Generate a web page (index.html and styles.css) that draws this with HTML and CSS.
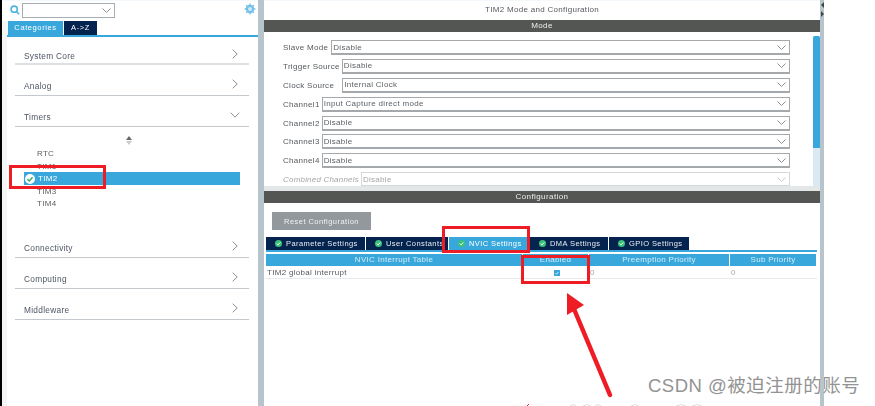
FILE: index.html

```html
<!DOCTYPE html>
<html lang="en">
<head>
    <meta charset="UTF-8">
    <title>TIM2 Mode and Configuration</title>
    <link rel="stylesheet" href="styles.css">
</head>
<body>
    <div id="shot">
        <div class="app">
            <!-- left tree panel -->
            <div class="side">
                <div class="search">
                    <svg class="search-icon" viewBox="0 0 10 10"><circle cx="4.2" cy="4.2" r="3.1"/><path d="M6.5 6.5 9.2 9.2"/></svg>
                    <div class="combo"><svg class="chev" viewBox="0 0 9 5"><path d="M.5.5 4.5 4.5 8.5.5"/></svg></div>
                    <svg class="gear" viewBox="0 0 12 12"><path class="gear-teeth" d="M6 .6v1.6M6 9.8v1.6M.6 6h1.6M9.8 6h1.6M2.2 2.2l1.1 1.1M8.7 8.7l1.1 1.1M2.2 9.8l1.1-1.1M8.7 3.3l1.1-1.1"/><circle cx="6" cy="6" r="4.2"/><circle class="gear-in" cx="6" cy="6" r="2"/></svg>
                </div>
                <div class="side-tabs">
                    <div class="side-tab on">Categories</div>
                    <div class="side-tab">A-&gt;Z</div>
                </div>
                <div class="tree">
                    <div class="group first">System Core<svg class="arrow" viewBox="0 0 6 10"><path d="M.7.7 5.2 5 .7 9.3"/></svg></div>
                    <div class="group">Analog<svg class="arrow" viewBox="0 0 6 10"><path d="M.7.7 5.2 5 .7 9.3"/></svg></div>
                    <div class="group">Timers<svg class="arrow down" viewBox="0 0 10 6"><path d="M.7.7 5 5.2 9.3.7"/></svg></div>
                    <div class="group-body">
                        <div class="sorter"><span class="up"></span><span class="dn"></span></div>
                        <div class="item">RTC</div>
                        <div class="item">TIM1</div>
                        <div class="item sel">
                            <svg class="ok" viewBox="0 0 10 10"><circle cx="5" cy="5" r="5"/><path d="M2.4 5.2 4.3 7 7.6 3.3"/></svg>
                            TIM2
                        </div>
                        <div class="item">TIM3</div>
                        <div class="item">TIM4</div>
                    </div>
                    <div class="group">Connectivity<svg class="arrow" viewBox="0 0 6 10"><path d="M.7.7 5.2 5 .7 9.3"/></svg></div>
                    <div class="group">Computing<svg class="arrow" viewBox="0 0 6 10"><path d="M.7.7 5.2 5 .7 9.3"/></svg></div>
                    <div class="group">Middleware<svg class="arrow" viewBox="0 0 6 10"><path d="M.7.7 5.2 5 .7 9.3"/></svg></div>
                </div>
            </div>

            <div class="split"></div>

            <!-- right configuration panel -->
            <div class="main">
                <div class="title">TIM2 Mode and Configuration</div>
                <div class="bar">Mode</div>
                <div class="mode">
                    <div class="form">
                        <div class="row"><label class="tight">Slave Mode</label><div class="select">Disable<svg class="chev" viewBox="0 0 9 5"><path d="M.5.5 4.5 4.5 8.5.5"/></svg></div></div>
                        <div class="row"><label>Trigger Source</label><div class="select">Disable<svg class="chev" viewBox="0 0 9 5"><path d="M.5.5 4.5 4.5 8.5.5"/></svg></div></div>
                        <div class="row"><label class="wide">Clock Source</label><div class="select">Internal Clock<svg class="chev" viewBox="0 0 9 5"><path d="M.5.5 4.5 4.5 8.5.5"/></svg></div></div>
                        <div class="row"><label>Channel1</label><div class="select">Input Capture direct mode<svg class="chev" viewBox="0 0 9 5"><path d="M.5.5 4.5 4.5 8.5.5"/></svg></div></div>
                        <div class="row"><label>Channel2</label><div class="select">Disable<svg class="chev" viewBox="0 0 9 5"><path d="M.5.5 4.5 4.5 8.5.5"/></svg></div></div>
                        <div class="row"><label>Channel3</label><div class="select">Disable<svg class="chev" viewBox="0 0 9 5"><path d="M.5.5 4.5 4.5 8.5.5"/></svg></div></div>
                        <div class="row"><label>Channel4</label><div class="select">Disable<svg class="chev" viewBox="0 0 9 5"><path d="M.5.5 4.5 4.5 8.5.5"/></svg></div></div>
                        <div class="row off"><label>Combined Channels</label><div class="select">Disable<svg class="chev" viewBox="0 0 9 5"><path d="M.5.5 4.5 4.5 8.5.5"/></svg></div></div>
                    </div>
                    <div class="scroll"><div class="thumb"></div></div>
                </div>
                <div class="divider"></div>
                <div class="bar">Configuration</div>
                <div class="config">
                    <button class="reset">Reset Configuration</button>
                    <div class="tabs">
                        <div class="tab w1"><svg class="tick" viewBox="0 0 10 10"><circle cx="5" cy="5" r="5"/><path d="M2.6 5.2 4.4 7 7.5 3.4"/></svg>Parameter Settings</div>
                        <div class="tab w2"><svg class="tick" viewBox="0 0 10 10"><circle cx="5" cy="5" r="5"/><path d="M2.6 5.2 4.4 7 7.5 3.4"/></svg>User Constants</div>
                        <div class="tab w3 on"><svg class="tick" viewBox="0 0 10 10"><circle cx="5" cy="5" r="5"/><path d="M2.6 5.2 4.4 7 7.5 3.4"/></svg>NVIC Settings</div>
                        <div class="tab w4"><svg class="tick" viewBox="0 0 10 10"><circle cx="5" cy="5" r="5"/><path d="M2.6 5.2 4.4 7 7.5 3.4"/></svg>DMA Settings</div>
                        <div class="tab w5"><svg class="tick" viewBox="0 0 10 10"><circle cx="5" cy="5" r="5"/><path d="M2.6 5.2 4.4 7 7.5 3.4"/></svg>GPIO Settings</div>
                    </div>
                    <div class="table">
                        <div class="th">NVIC Interrupt Table</div>
                        <div class="th">Enabled</div>
                        <div class="th">Preemption Priority</div>
                        <div class="th">Sub Priority</div>
                        <div class="td name">TIM2 global interrupt</div>
                        <div class="td mid"><svg class="check" viewBox="0 0 7 7"><rect width="7" height="7"/><path d="M1.8 3.7 3 4.9 5.3 2.2"/></svg></div>
                        <div class="td">0</div>
                        <div class="td">0</div>
                    </div>
                </div>
            </div>

            <div class="split thin">
                <span class="nub left"></span>
                <span class="nub right"></span>
            </div>
            <div class="blank"></div>
        </div>

        <!-- red annotations drawn over the screenshot -->
        <div class="mark m1"></div>
        <div class="mark m2"></div>
        <div class="mark m3"></div>
        <svg class="pointer" viewBox="0 0 875 406">
            <path class="shaft" d="M610 395 574 309"/>
            <path class="head" d="M567 293 584 305 567 315Z"/>
            <path class="scrap" d="M570 406q3-3 6 0M583 406q4-3 8 0M595 406q3-3 6 0M631 406q4-3 8 0M676 406q5-3 10 0M692 406q5-3 10 0"/>
            <path class="scrap red" d="M527 406l2-2"/>
        </svg>
        <div class="watermark">CSDN @被迫注册的账号</div>
    </div>
</body>
</html>
```

FILE: styles.css

```css
* {
    box-sizing: border-box;
    padding: 0;
    margin: 0;
}

body {
    background-color: #fff;
    font-family: "Liberation Sans", Arial, sans-serif;
    overflow: hidden;
}

#shot {
    position: relative;
    width: 875px;
    height: 406px;
    overflow: hidden;
}

.app {
    display: flex;
    height: 100%;
    padding-left: 2px;
    background-color: #000;
    font-size: 8px;
    letter-spacing: .3px;
    color: #55595e;
    filter: blur(.4px);
}

svg {
    display: block;
    flex: none;
}

/* left panel */
.side {
    width: 256px;
    padding-left: 5px;
    background-color: #f4f5f5;
}

.search {
    display: flex;
    align-items: flex-start;
    height: 21px;
    margin-left: -5px;
    padding: 2px 0 0 8px;
    background-color: #fff;
    border-top: 1px solid #f2f8fb;
}

.search-icon {
    width: 10px;
    height: 10px;
    margin: 2px 2px 0 0;
    fill: none;
    stroke: #4fb2e2;
    stroke-width: 1.6;
}

.combo {
    display: flex;
    align-items: center;
    justify-content: flex-end;
    width: 93px;
    height: 15px;
    padding-right: 3px;
    background-color: #fff;
    border: 1px solid #a8adaf;
}

.chev {
    width: 9px;
    height: 5px;
    fill: none;
    stroke: #8a8f93;
}

.gear {
    width: 12px;
    height: 12px;
    margin: 0 0 0 129px;
    fill: #74c0e8;
}

.gear-in {
    fill: #cde8f6;
}

.gear-teeth {
    stroke: #74c0e8;
    stroke-width: 1.4;
}

.side-tabs {
    display: flex;
    gap: 1px;
    height: 14px;
    margin-left: 1px;
    background-color: #fff;
}

.side-tab {
    width: 33px;
    line-height: 14px;
    text-align: center;
    font-size: 7.5px;
    letter-spacing: .6px;
    color: #fff;
    background-color: #04234f;
}

.side-tab.on {
    width: 55px;
    background-color: #38a8dc;
}

.tree {
    height: 371px;
    padding: 0 9px 0 8px;
    background-color: #fff;
    border-top: 2px solid #38a8dc;
}

.group {
    display: flex;
    align-items: center;
    justify-content: space-between;
    height: 31px;
    padding: 12px 11px 0 9px;
    font-size: 8.3px;
    color: #4d5563;
    border-bottom: 1px solid #c3c9cc;
}

.group.first {
    height: 28px;
    border-bottom: 2px solid #dde1e4;
}

.arrow {
    width: 6px;
    height: 10px;
    margin-top: -4px;
    fill: none;
    stroke: #8b8f93;
}

.arrow.down {
    width: 10px;
    height: 6px;
    margin-right: -2px;
}

.group-body {
    height: 100px;
    padding: 8px 0 0 9px;
}

.sorter {
    display: flex;
    flex-direction: column;
    align-items: center;
    gap: 1px;
    height: 12.5px;
    margin-right: 15px;
    padding-top: 1px;
}

.up,
.dn {
    width: 0;
    height: 0;
    border-left: 3px solid transparent;
    border-right: 3px solid transparent;
}

.up {
    border-bottom: 4px solid #666;
}

.dn {
    border-top: 4px solid #c9cccc;
}

.item {
    display: flex;
    align-items: center;
    height: 12.4px;
    padding-left: 13px;
    color: #5d5d5d;
}

.item.sel {
    height: 13px;
    margin-right: 9px;
    padding-left: 1px;
    color: #fff;
    background-color: #38a8dc;
}

.ok {
    width: 10px;
    height: 10px;
    margin-right: 3px;
    fill: #fff;
}

.ok path {
    fill: none;
    stroke: #35ac68;
    stroke-width: 1.5;
}

.split {
    width: 6px;
    background-color: #b8c4cc;
}

.split.thin {
    position: relative;
    width: 4px;
}

.nub {
    position: absolute;
    left: 1px;
    width: 0;
    height: 0;
    border-top: 3px solid transparent;
    border-bottom: 3px solid transparent;
}

.nub.left {
    top: 2px;
    border-right: 3px solid #444;
}

.nub.right {
    top: 11px;
    border-left: 3px solid #444;
}

.blank {
    flex: 1;
    background-color: #fff;
}

/* right panel */
.main {
    display: flex;
    flex-direction: column;
    width: 556px;
    background-color: #fff;
}

.title {
    height: 20px;
    line-height: 18px;
    text-align: center;
    border-top: 1px solid #f2f8fb;
}

.bar {
    flex: none;
    height: 12px;
    line-height: 12px;
    text-align: center;
    letter-spacing: .4px;
    color: #eee;
    background-color: #545654;
}

.mode {
    display: flex;
    height: 154px;
    overflow: hidden;
}

.form {
    flex: 1;
    padding: 8px 23px 0 19px;
}

.row {
    display: flex;
    align-items: center;
    gap: 2px;
    height: 15px;
    margin-bottom: 3.9px;
}

.row label {
    white-space: nowrap;
}

.row label.tight {
    margin-right: 1px;
}

.row label.wide {
    margin-right: 6px;
}

.select {
    display: flex;
    align-items: center;
    justify-content: space-between;
    flex: 1;
    height: 15px;
    padding: 0 3px 0 1px;
    color: #5e6266;
    border: 1px solid #a5a9ab;
    border-bottom-width: 2px;
}

.off label {
    font-style: italic;
    letter-spacing: .2px;
    color: #a6a6a6;
}

.off .select {
    color: #a6a6a6;
    border-color: #d5d8da;
}

.off .chev {
    stroke: #c8cacc;
}

.scroll {
    width: 7px;
    margin: 4px 0 0;
    background-color: #dbe9f5;
}

.thumb {
    height: 112px;
    border-radius: 2px 2px 0 0;
    background-color: #38a8dc;
}

.divider {
    flex: none;
    height: 5px;
    background-color: #e4e7e8;
}

.config {
    flex: 1;
    padding: 9px 3px 0 2px;
}

.reset {
    display: block;
    width: 99px;
    height: 18px;
    margin: 0 0 7px 6px;
    font-family: inherit;
    font-size: 7.5px;
    letter-spacing: .45px;
    color: #f0f2f3;
    background-color: #92989c;
    border: none;
}

.tabs {
    display: flex;
    gap: 1px;
    height: 15px;
    border-bottom: 2px solid #38a8dc;
}

.tab {
    display: flex;
    align-items: center;
    padding-left: 9px;
    font-size: 7.5px;
    letter-spacing: .42px;
    white-space: nowrap;
    color: #e8eef2;
    background-color: #04234f;
}

.tab.on {
    color: #fff;
    background-color: #38a8dc;
}

.w1 { width: 99px; }
.w2 { width: 82px; }
.w3 { width: 80px; }
.w4 { width: 78px; }
.w5 { width: 80px; }

.tick {
    width: 7px;
    height: 7px;
    margin-right: 4px;
    fill: #3cc17a;
}

.tick path {
    fill: none;
    stroke: #fff;
    stroke-width: 1.4;
}

.table {
    display: grid;
    grid-template-columns: 257px 66px 141px 87px;
    margin-top: 2px;
}

.th {
    height: 12px;
    line-height: 12px;
    text-align: center;
    color: #d4ebf8;
    background-color: #38a8dc;
    border-right: 1px solid #fff;
}

.td {
    display: flex;
    align-items: center;
    height: 12px;
    margin-top: 1px;
    padding-left: 1px;
    color: #a6a6a6;
    border-bottom: 1px solid #e8ecee;
}

.td.name {
    color: #55595e;
}

.td.mid {
    justify-content: center;
}

.check {
    width: 6px;
    height: 6px;
    fill: #38a8dc;
}

.check path {
    fill: none;
    stroke: #fff;
    stroke-width: .9;
}

/* annotations */
.mark {
    position: absolute;
    border: 3px solid #ee1c25;
}

.m1 {
    left: 9px;
    top: 165px;
    width: 97px;
    height: 24px;
}

.m2 {
    left: 442px;
    top: 226px;
    width: 88px;
    height: 27px;
}

.m3 {
    left: 521px;
    top: 255px;
    width: 69px;
    height: 29px;
}

.pointer {
    position: absolute;
    left: 0;
    top: 0;
    width: 875px;
    height: 406px;
}

.shaft {
    fill: none;
    stroke: #ee1c25;
    stroke-width: 4.5;
    stroke-linecap: round;
}

.head {
    fill: #ee1c25;
}

.scrap {
    fill: none;
    stroke: #dcdcdc;
}

.scrap.red {
    stroke: #ee1c25;
}

.watermark {
    position: absolute;
    left: 648px;
    top: 376px;
    font-family: "Liberation Sans", "Noto Sans CJK SC", sans-serif;
    font-size: 18.5px;
    line-height: 20px;
    letter-spacing: .5px;
    white-space: nowrap;
    color: #939393;
    text-shadow: 0 0 1px #fff;
}
```
